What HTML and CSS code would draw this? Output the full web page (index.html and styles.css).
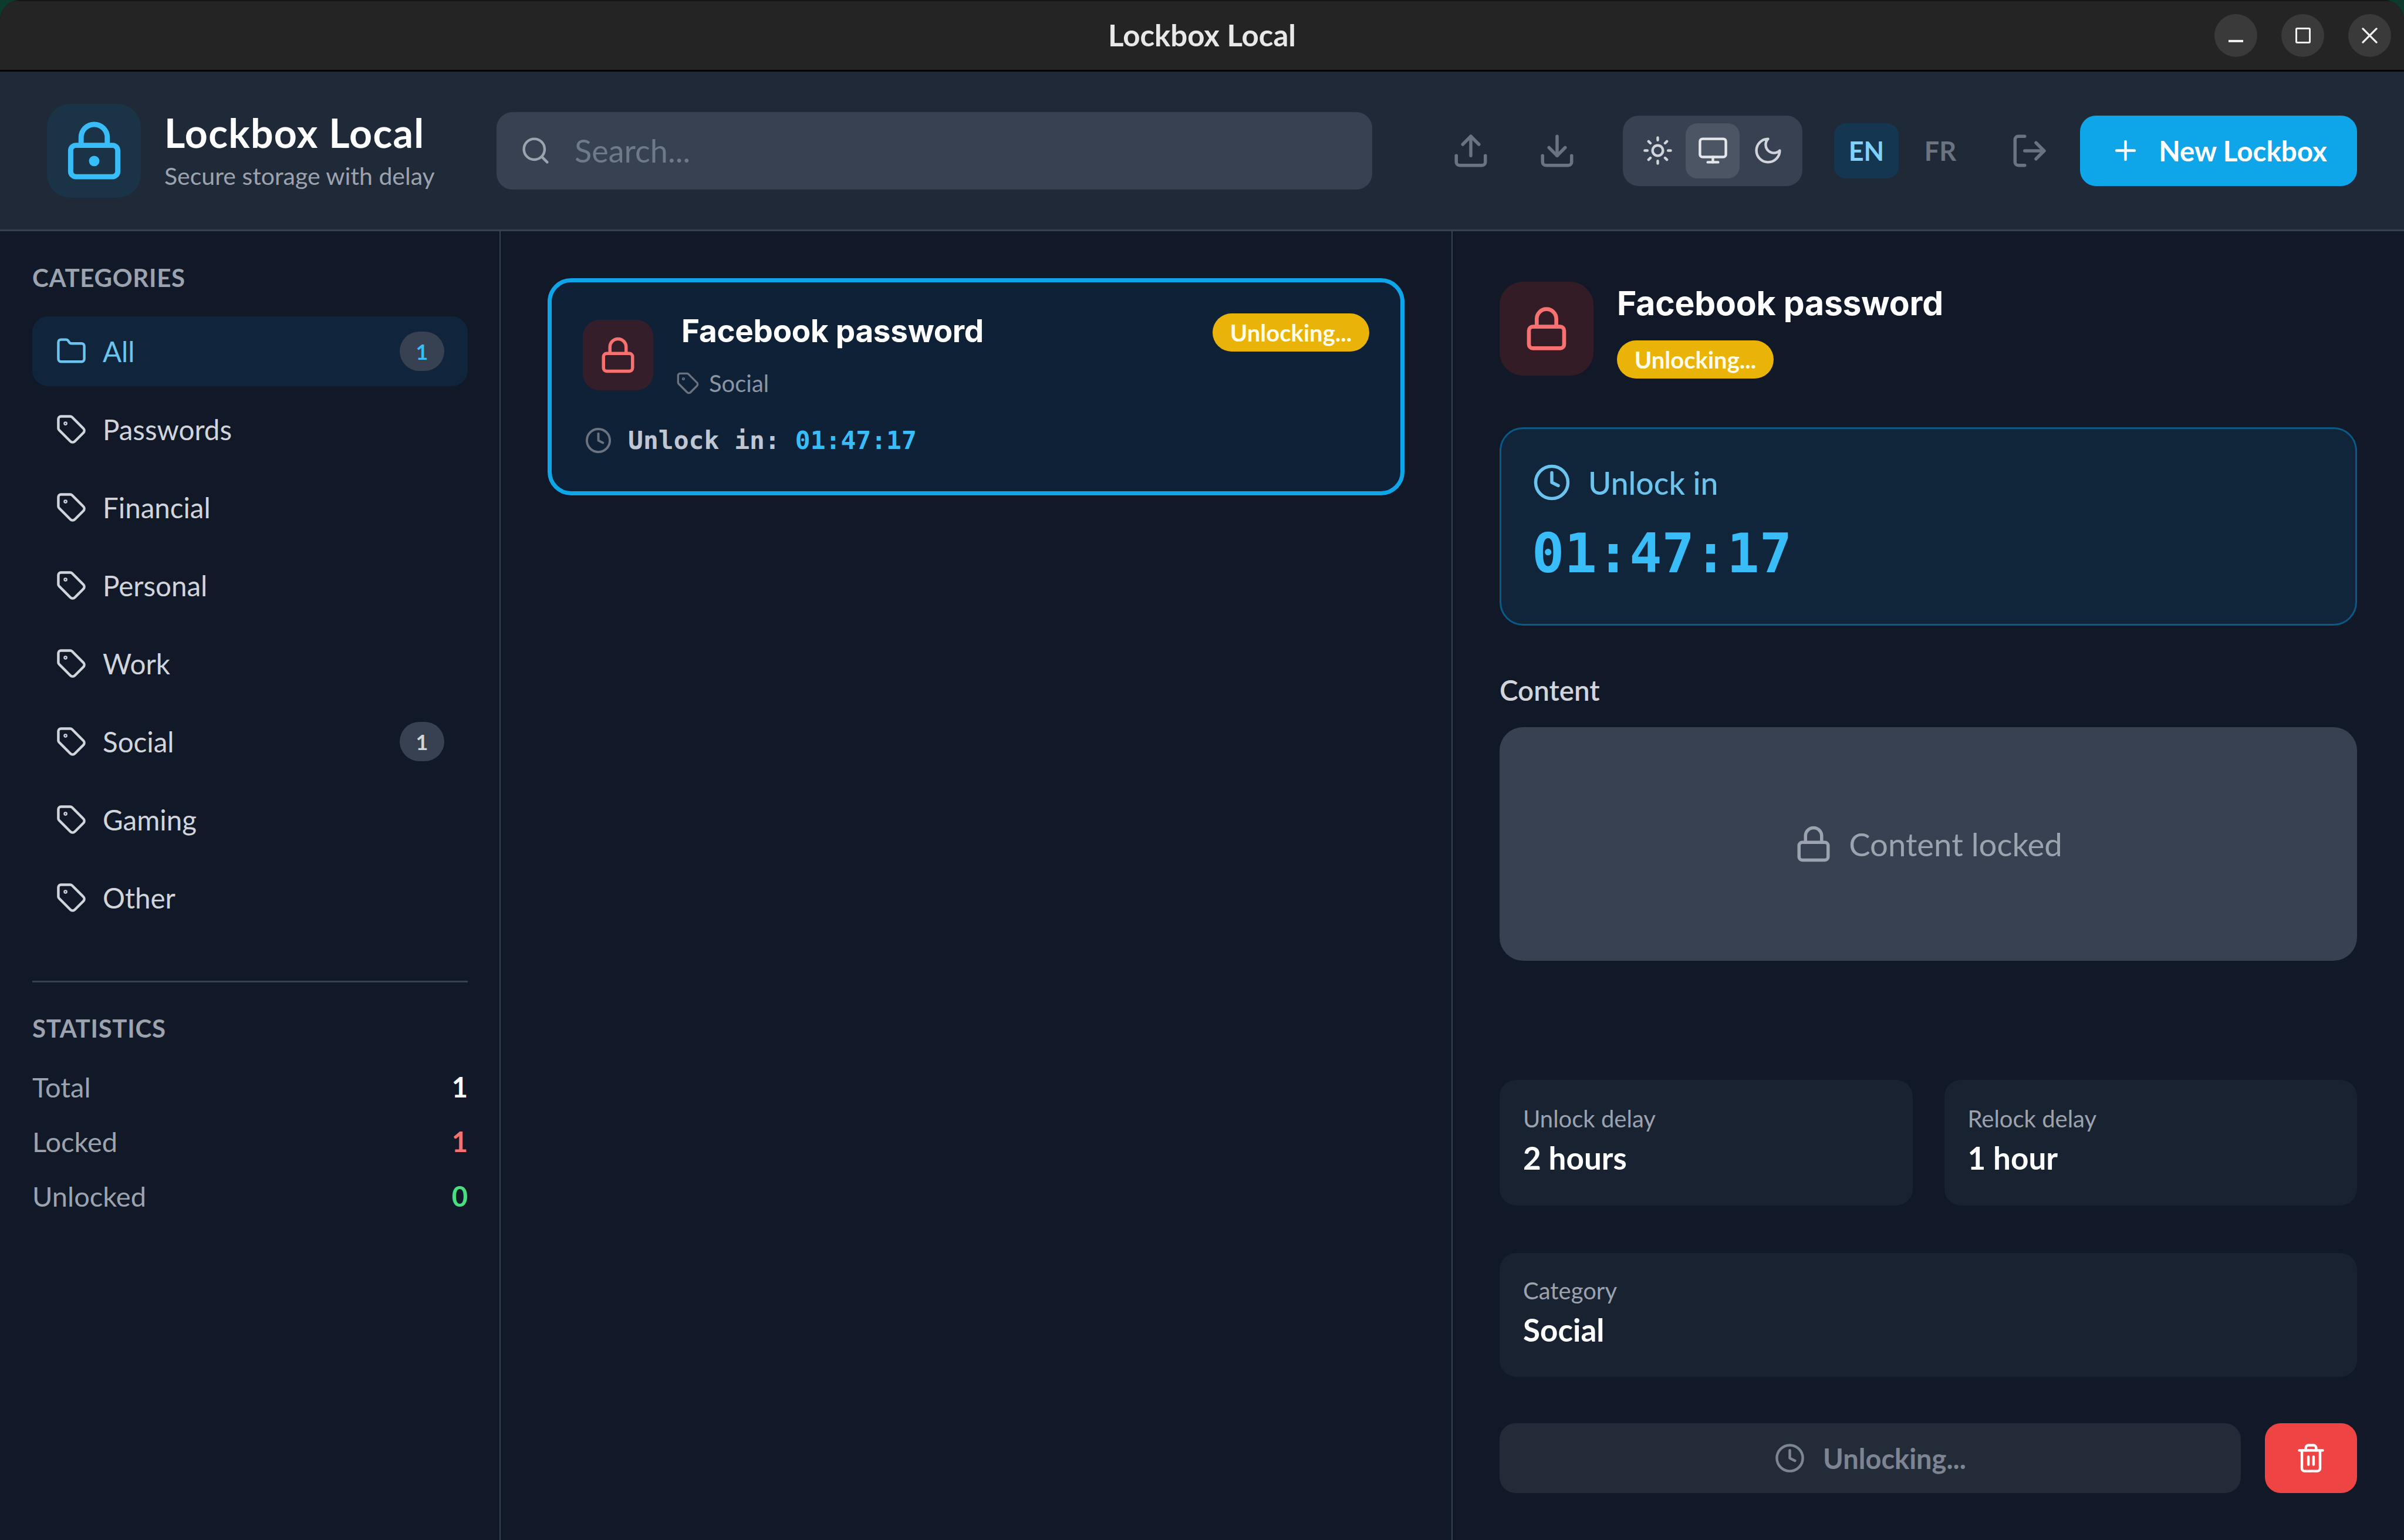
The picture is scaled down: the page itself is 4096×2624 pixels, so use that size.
FILE: index.html
```html
<!DOCTYPE html>
<html lang="en">
<head>
<meta charset="utf-8">
<title>Lockbox Local</title>
<link rel="stylesheet" href="styles.css">
</head>
<body>
<svg class="defs" width="0" height="0" aria-hidden="true">
  <symbol id="i-lock" viewBox="0 0 24 24"><rect x="3" y="11" width="18" height="11" rx="2"/><path d="M7 11V7a5 5 0 0 1 10 0v4"/></symbol>
  <symbol id="i-lock-key" viewBox="0 0 24 24"><circle cx="12" cy="16" r="1"/><rect x="3" y="10" width="18" height="12" rx="2"/><path d="M7 10V7a5 5 0 0 1 10 0v3"/></symbol>
  <symbol id="i-search" viewBox="0 0 24 24"><circle cx="11" cy="11" r="8"/><path d="m21 21-4.3-4.3"/></symbol>
  <symbol id="i-upload" viewBox="0 0 24 24"><path d="M21 15v4a2 2 0 0 1-2 2H5a2 2 0 0 1-2-2v-4"/><polyline points="17 8 12 3 7 8"/><line x1="12" y1="3" x2="12" y2="15"/></symbol>
  <symbol id="i-download" viewBox="0 0 24 24"><path d="M21 15v4a2 2 0 0 1-2 2H5a2 2 0 0 1-2-2v-4"/><polyline points="7 10 12 15 17 10"/><line x1="12" y1="15" x2="12" y2="3"/></symbol>
  <symbol id="i-sun" viewBox="0 0 24 24"><circle cx="12" cy="12" r="4"/><path d="M12 2v2M12 20v2M4.93 4.93l1.41 1.41M17.66 17.66l1.41 1.41M2 12h2M20 12h2M6.34 17.66l-1.41 1.41M19.07 4.93l-1.41 1.41"/></symbol>
  <symbol id="i-monitor" viewBox="0 0 24 24"><rect x="2" y="3" width="20" height="14" rx="2"/><line x1="8" y1="21" x2="16" y2="21"/><line x1="12" y1="17" x2="12" y2="21"/></symbol>
  <symbol id="i-moon" viewBox="0 0 24 24"><path d="M12 3a6 6 0 0 0 9 9 9 9 0 1 1-9-9Z"/></symbol>
  <symbol id="i-logout" viewBox="0 0 24 24"><path d="M9 21H5a2 2 0 0 1-2-2V5a2 2 0 0 1 2-2h4"/><polyline points="16 17 21 12 16 7"/><line x1="21" y1="12" x2="9" y2="12"/></symbol>
  <symbol id="i-plus" viewBox="0 0 24 24"><path d="M5 12h14M12 5v14"/></symbol>
  <symbol id="i-folder" viewBox="0 0 24 24"><path d="M20 20a2 2 0 0 0 2-2V8a2 2 0 0 0-2-2h-7.9a2 2 0 0 1-1.69-.9L9.6 3.9A2 2 0 0 0 7.93 3H4a2 2 0 0 0-2 2v13a2 2 0 0 0 2 2Z"/></symbol>
  <symbol id="i-tag" viewBox="0 0 24 24"><path d="M12.586 2.586A2 2 0 0 0 11.172 2H4a2 2 0 0 0-2 2v7.172a2 2 0 0 0 .586 1.414l8.704 8.704a2.426 2.426 0 0 0 3.42 0l6.58-6.58a2.426 2.426 0 0 0 0-3.42z"/><circle cx="7.5" cy="7.5" r=".5"/></symbol>
  <symbol id="i-clock" viewBox="0 0 24 24"><circle cx="12" cy="12" r="10"/><polyline points="12 6 12 12 16 14"/></symbol>
  <symbol id="i-trash" viewBox="0 0 24 24"><path d="M3 6h18"/><path d="M19 6v14c0 1-1 2-2 2H7c-1 0-2-1-2-2V6"/><path d="M8 6V4c0-1 1-2 2-2h4c1 0 2 1 2 2v2"/><line x1="10" y1="11" x2="10" y2="17"/><line x1="14" y1="11" x2="14" y2="17"/></symbol>
</svg>

<div class="window">
  <div class="titlebar">
    <div class="title">Lockbox Local</div>
    <div class="win-controls">
      <span class="win-btn"><span class="glyph-min"></span></span>
      <span class="win-btn"><span class="glyph-max"></span></span>
      <span class="win-btn"><svg class="glyph-close" viewBox="0 0 28 28"><path d="M2 2l24 24M26 2L2 26"/></svg></span>
    </div>
  </div>

  <header class="header">
    <div class="brand">
      <div class="brand-icon"><svg class="ic ic-32"><use href="#i-lock-key"/></svg></div>
      <div class="brand-text">
        <div class="brand-name">Lockbox Local</div>
        <div class="brand-sub">Secure storage with delay</div>
      </div>
    </div>
    <div class="search">
      <svg class="ic ic-16"><use href="#i-search"/></svg>
      <span class="search-ph">Search...</span>
    </div>
    <div class="actions">
      <button class="icon-btn"><svg class="ic ic-20"><use href="#i-upload"/></svg></button>
      <button class="icon-btn"><svg class="ic ic-20"><use href="#i-download"/></svg></button>
      <div class="theme">
        <button class="theme-btn"><svg class="ic ic-16"><use href="#i-sun"/></svg></button>
        <button class="theme-btn is-on"><svg class="ic ic-16"><use href="#i-monitor"/></svg></button>
        <button class="theme-btn"><svg class="ic ic-16"><use href="#i-moon"/></svg></button>
      </div>
      <div class="lang">
        <button class="lang-btn is-on">EN</button>
        <button class="lang-btn">FR</button>
      </div>
      <button class="icon-btn logout"><svg class="ic ic-20"><use href="#i-logout"/></svg></button>
      <button class="new-btn"><svg class="ic ic-16"><use href="#i-plus"/></svg><span>New Lockbox</span></button>
    </div>
  </header>

  <main class="main">
    <aside class="sidebar">
      <h2 class="side-head">Categories</h2>
      <nav class="cat-list">
        <a class="cat is-on"><svg class="ic ic-16"><use href="#i-folder"/></svg><span class="cat-name">All</span><span class="count">1</span></a>
        <a class="cat"><svg class="ic ic-16"><use href="#i-tag"/></svg><span class="cat-name">Passwords</span></a>
        <a class="cat"><svg class="ic ic-16"><use href="#i-tag"/></svg><span class="cat-name">Financial</span></a>
        <a class="cat"><svg class="ic ic-16"><use href="#i-tag"/></svg><span class="cat-name">Personal</span></a>
        <a class="cat"><svg class="ic ic-16"><use href="#i-tag"/></svg><span class="cat-name">Work</span></a>
        <a class="cat"><svg class="ic ic-16"><use href="#i-tag"/></svg><span class="cat-name">Social</span><span class="count">1</span></a>
        <a class="cat"><svg class="ic ic-16"><use href="#i-tag"/></svg><span class="cat-name">Gaming</span></a>
        <a class="cat"><svg class="ic ic-16"><use href="#i-tag"/></svg><span class="cat-name">Other</span></a>
      </nav>
      <div class="side-rule"></div>
      <h2 class="side-head stats-head">Statistics</h2>
      <div class="stats">
        <div class="stat"><span>Total</span><b class="v-total">1</b></div>
        <div class="stat"><span>Locked</span><b class="v-locked">1</b></div>
        <div class="stat"><span>Unlocked</span><b class="v-unlocked">0</b></div>
      </div>
    </aside>

    <section class="list">
      <article class="card">
        <div class="card-top">
          <div class="lock-tile lock-tile-sm"><svg class="ic ic-20"><use href="#i-lock"/></svg></div>
          <div class="card-info">
            <div class="card-title">Facebook password</div>
            <div class="card-cat"><svg class="ic ic-12"><use href="#i-tag"/></svg><span>Social</span></div>
          </div>
          <span class="badge">Unlocking...</span>
        </div>
        <div class="card-timer"><svg class="ic ic-14"><use href="#i-clock"/></svg><span class="mono">Unlock in: <b>01:47:17</b></span></div>
      </article>
    </section>

    <section class="detail">
      <div class="detail-head">
        <div class="lock-tile lock-tile-lg"><svg class="ic ic-24"><use href="#i-lock"/></svg></div>
        <div class="detail-info">
          <div class="detail-title">Facebook password</div>
          <span class="badge">Unlocking...</span>
        </div>
      </div>
      <div class="timer-box">
        <div class="timer-label"><svg class="ic ic-20"><use href="#i-clock"/></svg><span>Unlock in</span></div>
        <div class="timer-value">01:47:17</div>
      </div>
      <div class="content-label">Content</div>
      <div class="content-box"><svg class="ic ic-20"><use href="#i-lock"/></svg><span>Content locked</span></div>
      <div class="info-grid">
        <div class="info"><div class="info-k">Unlock delay</div><div class="info-v">2 hours</div></div>
        <div class="info"><div class="info-k">Relock delay</div><div class="info-v">1 hour</div></div>
      </div>
      <div class="info info-wide"><div class="info-k">Category</div><div class="info-v">Social</div></div>
      <div class="detail-actions">
        <button class="wait-btn"><svg class="ic ic-16"><use href="#i-clock"/></svg><span>Unlocking...</span></button>
        <button class="del-btn"><svg class="ic ic-16"><use href="#i-trash"/></svg></button>
      </div>
    </section>
  </main>
</div>
</body>
</html>
```
FILE: styles.css
```css
* { box-sizing: border-box; margin: 0; padding: 0; }
html, body { width: 100%; height: 100%; overflow: hidden; }
body { background: #0d3a2e; font-family: "Lato", "Noto Sans", sans-serif; color: #f3f4f6; }
button { border: 0; background: none; font: inherit; color: inherit; display: flex; align-items: center; justify-content: center; }
.defs { position: absolute; }

.ic { display: block; flex: none; fill: none; stroke: currentColor; stroke-width: 2; stroke-linecap: round; stroke-linejoin: round; }
.ic-12 { width: 40px; height: 40px; }
.ic-14 { width: 47px; height: 47px; }
.ic-16 { width: 53px; height: 53px; }
.ic-20 { width: 66px; height: 66px; }
.ic-24 { width: 80px; height: 80px; }
.ic-32 { width: 107px; height: 107px; }

.window { width: 4096px; height: 2624px; display: flex; flex-direction: column; background: #111827; border-radius: 34px 34px 0 0; overflow: hidden; }

/* title bar */
.titlebar { flex: none; height: 122px; background: #242424; border-top: 2px solid #14181a; border-bottom: 3px solid #050505; display: grid; grid-template-columns: 1fr auto 1fr; align-items: center; }
.title { grid-column: 2; font-size: 51px; font-weight: 700; color: #e8e8e8; margin-top: -2px; }
.win-controls { grid-column: 3; justify-self: end; display: flex; gap: 41px; padding-right: 22px; }
.win-btn { width: 73px; height: 73px; border-radius: 50%; background: #3a3a3a; display: flex; align-items: center; justify-content: center; }
.glyph-min { width: 25px; height: 4px; background: #f0f0f0; margin-top: 19px; }
.glyph-max { width: 26px; height: 27px; border: 3px solid #f0f0f0; border-radius: 3px; }
.glyph-close { width: 27px; height: 27px; fill: none; stroke: #f0f0f0; stroke-width: 3.4; stroke-linecap: round; }

/* header */
.header { flex: none; height: 272px; background: #1f2937; border-bottom: 3px solid #374151; padding: 0 80px; display: flex; align-items: center; }
.brand { flex: none; width: 660px; display: flex; align-items: center; gap: 40px; }
.brand-icon { flex: none; width: 160px; height: 160px; border-radius: 40px; background: #1a3347; color: #38bdf8; display: flex; align-items: center; justify-content: center; }
.brand-text { flex: none; white-space: nowrap; }
.brand-name { font-size: 68px; font-weight: 700; color: #fff; line-height: 80px; letter-spacing: 1.3px; }
.brand-sub { font-size: 41px; color: #9ca3af; line-height: 56px; margin-top: 6px; }
.search { flex: none; margin-left: 106px; width: 1492px; height: 132px; border-radius: 27px; background: #374151; color: #9ca3af; display: flex; align-items: center; gap: 40px; padding-left: 40px; }
.search-ph { font-size: 54px; color: #6f7a88; }
.actions { margin-left: auto; display: flex; align-items: center; }
.icon-btn { flex: none; width: 120px; height: 120px; color: #6b7280; margin-right: 27px; }
.actions > .icon-btn:nth-child(2) { margin-right: 52px; }
.theme { flex: none; width: 306px; height: 120px; border-radius: 27px; background: #374151; padding: 13px; display: flex; justify-content: space-between; }
.theme-btn { width: 92px; height: 94px; border-radius: 20px; color: #d1d5db; }
.theme-btn.is-on { background: #4b5563; color: #e5e7eb; }
.lang { flex: none; margin-left: 54px; display: flex; gap: 16px; }
.lang-btn { width: 110px; height: 94px; border-radius: 20px; font-size: 45px; font-weight: 700; color: #6b7280; }
.lang-btn.is-on { background: #143650; color: #7dd3fc; }
.logout { margin-left: 37px; margin-right: 26px; }
.new-btn { flex: none; width: 472px; height: 120px; border-radius: 27px; background: #0ea5e9; color: #fff; gap: 30px; font-size: 47.5px; font-weight: 700; }

/* layout */
.main { flex: 1; min-height: 0; display: flex; }
.sidebar { flex: none; width: 853px; border-right: 2px solid #374151; padding: 56px 54px 0 55px; }
.list { flex: 1; min-width: 0; padding: 80px; }
.detail { flex: none; width: 1623px; border-left: 2px solid #374151; padding: 86px 80px 0 80px; }

/* sidebar */
.side-head { font-size: 42px; font-weight: 700; line-height: 46px; color: #9ca3af; text-transform: uppercase; letter-spacing: 0.7px; }
.cat-list { margin-top: 43px; display: flex; flex-direction: column; gap: 14px; }
.cat { height: 119px; border-radius: 27px; display: flex; align-items: center; gap: 27px; padding: 0 40px 0 40px; font-size: 47.5px; color: #d1d5db; }
.cat.is-on { background: #10253b; color: #6cc3ee; }
.cat-name { flex: 1; }
.count { flex: none; min-width: 76px; height: 67px; border-radius: 34px; background: #374151; color: #d1d5db; font-size: 36px; font-weight: 700; display: flex; align-items: center; justify-content: center; }
.cat.is-on .count { color: #38bdf8; }
.side-rule { height: 3px; background: #374151; margin-top: 82px; }
.stats-head { margin-top: 55px; }
.stats { margin-top: 48px; display: flex; flex-direction: column; gap: 36px; }
.stat { height: 57px; display: flex; align-items: center; justify-content: space-between; font-size: 47px; color: #9ca3af; }
.stat b { font-weight: 700; }
.v-total { color: #fff; }
.v-locked { color: #f87171; }
.v-unlocked { color: #4ade80; }

/* card */
.card { height: 370px; border: 7px solid #0ea5e9; border-radius: 40px; background: #0f2137; padding: 53px; }
.card-top { display: flex; align-items: center; height: 142px; }
.lock-tile { flex: none; background: #331e2a; color: #f87171; display: flex; align-items: center; justify-content: center; }
.lock-tile-sm { width: 120px; height: 120px; border-radius: 28px; }
.lock-tile-lg { width: 160px; height: 160px; border-radius: 40px; background: #331c25; }
.card-info { flex: 1; margin-left: 48px; align-self: flex-start; }
.card-title { font-family: "Inter", "Open Sans", sans-serif; font-size: 53px; font-weight: 700; line-height: 60px; color: #fff; letter-spacing: -0.3px; }
.card-cat { margin-top: 39px; margin-left: -9px; display: flex; align-items: center; gap: 16px; font-size: 40px; color: #8b95a3; line-height: 40px; }
.card-cat .ic { color: #6b7280; }
.badge { flex: none; display: inline-flex; align-items: center; justify-content: center; width: 267px; height: 65px; border-radius: 33px; background: #eab308; color: #fefce8; font-size: 40px; font-weight: 700; }
.card-top > .badge { align-self: flex-start; }
.card-timer { margin-top: 49px; margin-left: 3px; display: flex; align-items: center; gap: 27px; color: #6b7280; }
.mono { font-family: "DejaVu Sans Mono", "Liberation Mono", monospace; font-size: 43px; font-weight: 700; color: #c0c7d2; white-space: pre; }
.mono b { color: #38bdf8; font-weight: 700; }

/* detail */
.detail-head { display: flex; gap: 40px; height: 165px; }
.detail-title { font-family: "Inter", "Open Sans", sans-serif; font-size: 57px; font-weight: 700; line-height: 74px; color: #fff; letter-spacing: -0.2px; }
.detail-info .badge { margin-top: 26px; }
.timer-box { margin-top: 83px; height: 338px; border: 3px solid #0b5a85; border-radius: 40px; background: #10243a; padding: 58px 53px 0; }
.timer-label { display: flex; align-items: center; gap: 29px; font-size: 53.5px; font-weight: 500; color: #6cc3ee; line-height: 66px; }
.timer-value { margin-top: 33px; margin-left: -1px; font-family: "DejaVu Sans Mono", "Liberation Mono", monospace; font-size: 92px; font-weight: 700; line-height: 112px; color: #38bdf8; }
.content-label { margin-top: 85px; font-size: 47.5px; font-weight: 600; line-height: 50px; color: #d1d5db; }
.content-box { margin-top: 38px; height: 398px; border-radius: 40px; background: #374151; color: #9ca3af; display: flex; align-items: center; justify-content: center; gap: 27px; font-size: 54.5px; }
.info-grid { margin-top: 203px; display: grid; grid-template-columns: 1fr 1fr; gap: 54px; }
.info { height: 214px; border-radius: 28px; background: #192230; padding: 46px 40px 0; }
.info-wide { margin-top: 81px; height: 211px; padding-top: 44px; }
.info-k { font-size: 40px; line-height: 40px; color: #9ca3af; }
.info-v { margin-top: 16px; font-size: 53px; font-weight: 700; line-height: 62px; color: #fff; }
.detail-actions { margin-top: 79px; display: flex; gap: 41px; }
.wait-btn { flex: 1; height: 119px; border-radius: 27px; background: #232b39; color: #7d8592; gap: 30px; font-size: 47px; font-weight: 700; }
.del-btn { flex: none; width: 157px; height: 119px; border-radius: 27px; background: #ef4444; color: #fff; }
```
